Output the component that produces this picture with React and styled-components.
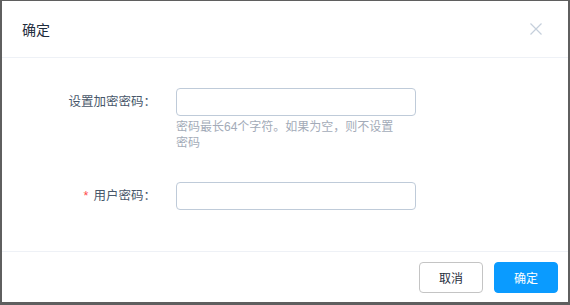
import styled, { createGlobalStyle } from "styled-components";

const GlobalStyle = createGlobalStyle`
  html, body {
    margin: 0;
    padding: 0;
    background: #5f5f5f;
  }
  body {
    font-family: "Liberation Sans", "Noto Sans CJK SC", sans-serif;
  }
`;

const Page = styled.div`
  width: 570px;
  height: 305px;
  box-sizing: border-box;
  padding: 1px 2px 3px 2px;
`;

const Dialog = styled.div`
  width: 566px;
  height: 301px;
  background: #fff;
  display: flex;
  flex-direction: column;
`;

const Header = styled.div`
  height: 56px;
  display: flex;
  align-items: center;
  justify-content: space-between;
  padding: 0 26px 0 20px;
  border-bottom: 1px solid #eef1f6;
`;

const Title = styled.span`
  font-size: 14px;
  color: #1f2d3d;
`;

const Close = styled.svg`
  width: 12px;
  height: 12px;
  display: block;
`;

const Body = styled.div`
  flex: 1;
  padding: 30px 0 0 0;
  display: flex;
  flex-direction: column;
  gap: 31px;
`;

const Row = styled.div`
  display: flex;
  align-items: flex-start;
`;

const Label = styled.label`
  width: 174px;
  padding-right: 20px;
  box-sizing: border-box;
  text-align: right;
  font-size: 12.5px;
  line-height: 28px;
  color: #48576a;
`;

const Star = styled.span`
  color: #ff4949;
  margin-right: 5px;
`;

const Field = styled.div`
  width: 240px;
`;

const Input = styled.input`
  width: 240px;
  height: 28px;
  box-sizing: border-box;
  border: 1px solid #bfcbd9;
  border-radius: 4px;
  outline: none;
  padding: 0 8px;
  font-size: 12px;
  display: block;
`;

const Help = styled.div`
  width: 228px;
  margin-top: 3px;
  font-size: 12px;
  line-height: 16px;
  color: #a3abb8;
`;

const Footer = styled.div`
  height: 51px;
  box-sizing: border-box;
  border-top: 1px solid #eef1f6;
  padding: 10px 10px 10px 0;
  display: flex;
  justify-content: flex-end;
  gap: 11px;
`;

const Button = styled.button`
  width: 64px;
  height: 31px;
  box-sizing: border-box;
  border-radius: 4px;
  font-family: inherit;
  font-size: 12px;
  cursor: pointer;
  border: 1px solid ${(p) => (p.$primary ? "#0a9bff" : "#c4c4c4")};
  background: ${(p) => (p.$primary ? "#0a9bff" : "#fff")};
  color: ${(p) => (p.$primary ? "#fff" : "#1f2d3d")};
`;

export default function App() {
  return (
    <>
      <GlobalStyle />
      <Page>
        <Dialog>
          <Header>
            <Title>确定</Title>
            <Close viewBox="0 0 12 12">
              <path d="M0.5 0.5 L11.5 11.5 M11.5 0.5 L0.5 11.5" stroke="#c5cfdb" strokeWidth="1.2" />
            </Close>
          </Header>
          <Body>
            <Row>
              <Label>设置加密密码：</Label>
              <Field>
                <Input type="password" />
                <Help>密码最长64个字符。如果为空，则不设置密码</Help>
              </Field>
            </Row>
            <Row>
              <Label>
                <Star>*</Star>用户密码：
              </Label>
              <Field>
                <Input type="password" />
              </Field>
            </Row>
          </Body>
          <Footer>
            <Button>取消</Button>
            <Button $primary>确定</Button>
          </Footer>
        </Dialog>
      </Page>
    </>
  );
}
